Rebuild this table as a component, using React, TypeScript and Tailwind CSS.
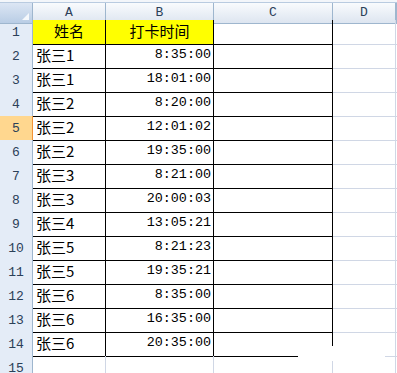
const rows: [string, string][] = [
  ["张三1", "8:35:00"],
  ["张三1", "18:01:00"],
  ["张三2", "8:20:00"],
  ["张三2", "12:01:02"],
  ["张三2", "19:35:00"],
  ["张三3", "8:21:00"],
  ["张三3", "20:00:03"],
  ["张三4", "13:05:21"],
  ["张三5", "8:21:23"],
  ["张三5", "19:35:21"],
  ["张三6", "8:35:00"],
  ["张三6", "16:35:00"],
  ["张三6", "20:35:00"],
];

const mono = { fontFamily: '"Liberation Mono", "DejaVu Sans Mono", monospace' };
const cjk = { fontFamily: '"Noto Sans CJK SC", "Liberation Sans", sans-serif' };

const grid = "grid grid-cols-[33px_73px_108px_119px_63px_1fr]";

function RowHead({ n, active }: { n: number; active?: boolean }) {
  return (
    <div
      className={
        "flex items-end justify-center pb-[1px] text-[13px] text-[#2b4058] border-r border-b " +
        (active
          ? "bg-[#ffd78f] border-[#f29436]"
          : "bg-[#e4ecf7] border-[#9eb6ce]")
      }
      style={mono}
    >
      {n}
    </div>
  );
}

export default function App() {
  return (
    <div className="relative w-[397px] h-[373px] overflow-hidden bg-white">
      <div className="h-[3px] bg-[#f3f6fa] border-b border-[#b9cbe0]" />

      {/* column headers */}
      <div className={grid + " h-[17px]"}>
        <div className="relative bg-gradient-to-b from-[#dce6f4] to-[#b9cde5] border-r border-b border-[#9eb6ce]">
          <div className="absolute right-[3px] bottom-[3px] w-0 h-0 border-l-[7px] border-l-transparent border-b-[7px] border-b-[#f5f8fc]" />
        </div>
        {["A", "B", "C", "D", ""].map((c, i) => (
          <div
            key={i}
            className="flex items-center justify-center text-[13px] text-[#2b4058] bg-gradient-to-b from-[#f9fbfd] to-[#dde5f0] border-r border-b border-[#9eb6ce]"
            style={mono}
          >
            {c}
          </div>
        ))}
      </div>

      {/* row 1 */}
      <div className={grid + " h-[24px]"}>
        <RowHead n={1} />
        <div
          className="flex items-end justify-center pb-[1px] bg-[#ffff00] border-r border-b border-black text-[15px] text-black"
          style={cjk}
        >
          姓名
        </div>
        <div
          className="flex items-end justify-center pb-[1px] bg-[#ffff00] border-r border-b border-black text-[15px] text-black"
          style={cjk}
        >
          打卡时间
        </div>
        <div className="border-r border-b border-black" />
        <div className="border-r border-b border-[#d0d7e5]" />
        <div className="border-b border-[#d0d7e5]" />
      </div>

      {rows.map(([name, time], i) => (
        <div key={i} className={grid + " h-[24px]"}>
          <RowHead n={i + 2} active={i + 2 === 5} />
          <div
            className="flex items-end pl-[3px] pb-[1px] border-r border-b border-black text-[15px] text-black"
            style={cjk}
          >
            {name}
          </div>
          <div
            className="flex items-end justify-end pr-[2px] pb-[2px] border-r border-b border-black text-[13.4px] text-black"
            style={mono}
          >
            {time}
          </div>
          <div className="border-r border-b border-black" />
          <div className="border-r border-b border-[#d0d7e5]" />
          <div className="border-b border-[#d0d7e5]" />
        </div>
      ))}

      {/* row 15 */}
      <div className={grid + " h-[24px]"}>
        <RowHead n={15} />
        <div className="border-r border-[#d0d7e5]" />
        <div className="border-r border-[#d0d7e5]" />
        <div className="border-r border-[#d0d7e5]" />
        <div className="border-r border-[#d0d7e5]" />
        <div />
      </div>

      {/* erased patch */}
      <div className="absolute left-[298px] top-[346px] w-[87px] h-[15px] bg-white" />
    </div>
  );
}
